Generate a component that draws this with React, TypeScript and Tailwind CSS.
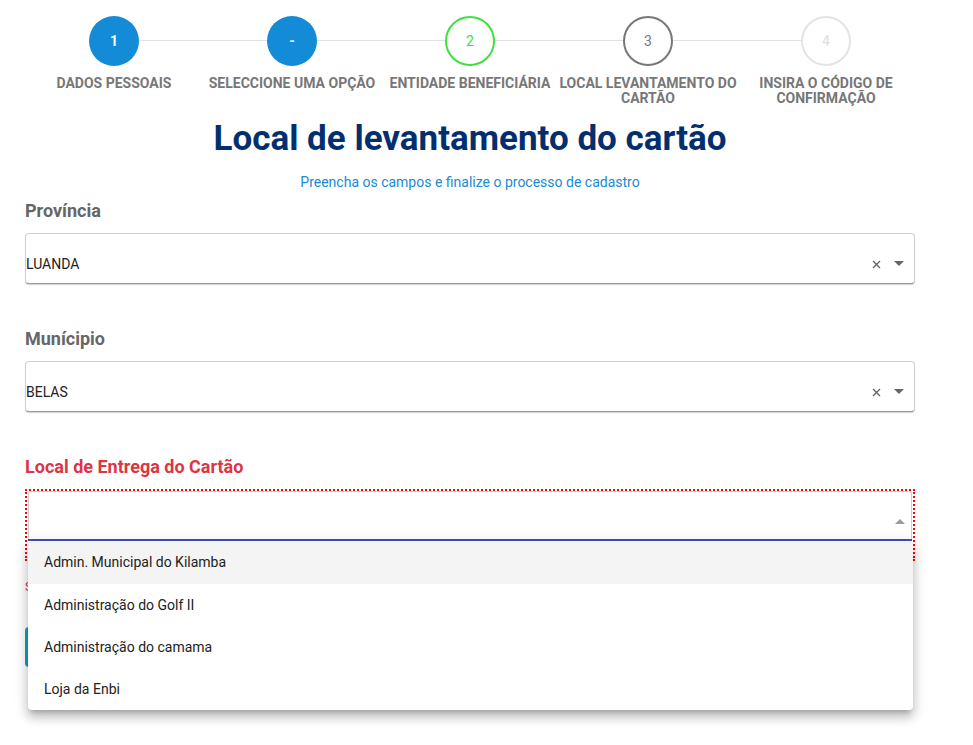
import React from "react";

const steps = [
  { n: "1", lines: ["DADOS PESSOAIS"], kind: "done" },
  { n: "-", lines: ["SELECCIONE UMA OPÇÃO"], kind: "done" },
  { n: "2", lines: ["ENTIDADE BENEFICIÁRIA"], kind: "green" },
  { n: "3", lines: ["LOCAL LEVANTAMENTO DO", "CARTÃO"], kind: "current" },
  { n: "4", lines: ["INSIRA O CÓDIGO DE", "CONFIRMAÇÃO"], kind: "todo" },
];

function Circle({ n, kind }: { n: string; kind: string }) {
  if (kind === "done")
    return (
      <div className="relative z-10 w-[50px] h-[50px] rounded-full bg-[#138bd6] text-white font-bold text-[14px] flex items-center justify-center">
        {n}
      </div>
    );
  if (kind === "green")
    return (
      <div className="relative z-10 w-[50px] h-[50px] rounded-full bg-white border-2 border-[#3ee03e] text-[#3ee03e] text-[14px] flex items-center justify-center">
        {n}
      </div>
    );
  if (kind === "current")
    return (
      <div className="relative z-10 w-[50px] h-[50px] rounded-full bg-white border-2 border-[#777777] text-[#777777] text-[14px] flex items-center justify-center">
        {n}
      </div>
    );
  return (
    <div className="relative z-10 w-[50px] h-[50px] rounded-full bg-white border-2 border-[#e4e4e4] text-[#dedede] text-[14px] flex items-center justify-center">
      {n}
    </div>
  );
}

function Caret({ up = false, color = "#666" }: { up?: boolean; color?: string }) {
  return (
    <svg width="10" height="5" viewBox="0 0 10 5">
      {up ? <path d="M0 5 L5 0 L10 5 Z" fill={color} /> : <path d="M0 0 L10 0 L5 5 Z" fill={color} />}
    </svg>
  );
}

function Cross() {
  return (
    <svg width="9" height="9" viewBox="0 0 9 9">
      <path d="M1 1 L8 8 M8 1 L1 8" stroke="#666" strokeWidth="1.4" />
    </svg>
  );
}

function FilledSelect({ value }: { value: string }) {
  return (
    <div className="h-[51px] rounded-[4px] border border-[#d0d0d0] border-b-[#9a9a9a] shadow-[0_1px_1px_rgba(0,0,0,0.18)] bg-white flex items-center pt-[11px]">
      <span className="flex-1 text-[14px] text-[#222] leading-none">{value}</span>
      <span className="mr-[13px] mt-[1px] flex items-center">
        <Cross />
      </span>
      <span className="mr-[10px] mt-[-1px] flex items-center">
        <Caret />
      </span>
    </div>
  );
}

export default function App() {
  const options = [
    "Admin. Municipal do Kilamba",
    "Administração do Golf II",
    "Administração do camama",
    "Loja da Enbi",
  ];
  return (
    <div className="min-h-[745px] bg-white font-['Roboto',_sans-serif]">
      <div className="w-[890px] ml-[25px]">
        {/* stepper */}
        <div className="flex">
          {steps.map((s, i) => (
            <div key={i} className="relative flex-1 flex flex-col items-center">
              {i < steps.length - 1 && (
                <div className="absolute top-[40px] left-[calc(50%+25px)] right-[calc(-50%+25px)] h-px bg-[#e2e2e2]" />
              )}
              <div className="mt-4">
                <Circle n={s.n} kind={s.kind} />
              </div>
              <div className="mt-[10px] text-[14px] leading-[15px] font-bold text-[#777777] text-center whitespace-nowrap">
                {s.lines.map((l, j) => (
                  <div key={j}>{l}</div>
                ))}
              </div>
            </div>
          ))}
        </div>

        <h1 className="mt-[11px] text-center text-[35px] leading-[43px] font-bold text-[#042f6f]">
          Local de levantamento do cartão
        </h1>
        <p className="mt-[12px] text-center text-[14px] leading-[20px] text-[#1a8ad4]">
          Preencha os campos e finalize o processo de cadastro
        </p>

        <div className="mt-[7px] text-[18px] leading-[24px] font-bold text-[#666]">Província</div>
        <div className="mt-[10px]">
          <FilledSelect value="LUANDA" />
        </div>

        <div className="mt-[43px] text-[18px] leading-[24px] font-bold text-[#666]">Munícipio</div>
        <div className="mt-[10px]">
          <FilledSelect value="BELAS" />
        </div>

        <div className="mt-[43px] text-[18px] leading-[24px] font-bold text-[#dc3545]">
          Local de Entrega do Cartão
        </div>
        <div className="relative mt-[10px]">
          <div className="h-[72px] border-2 border-dotted border-[#ff0000] pl-px pr-px">
            <div className="h-[48px] border border-[#cfcfcf] border-b-0 rounded-t-[3px] bg-white flex items-center justify-end pt-[12px] pr-[6px]">
              <Caret up color="#9a9a9a" />
            </div>
            <div className="h-[2px] bg-[#3f51b5]" />
          </div>

          <div className="mt-[19px] text-[12px] leading-[14px] text-[#dc3545]">
            Seleccione o local de entrega
          </div>
          <div className="mt-[33px] h-[40px] w-[120px] rounded-[4px] bg-[#17a2b8]" />

          {/* dropdown menu */}
          <div className="absolute left-[3px] top-[52px] w-[885px] bg-white rounded-b-[4px] shadow-[0px_5px_5px_-3px_rgba(0,0,0,0.2),0px_8px_10px_1px_rgba(0,0,0,0.14),0px_3px_14px_2px_rgba(0,0,0,0.12)] z-20">
            {options.map((o, i) => (
              <div
                key={o}
                className={`flex items-center pl-4 text-[14px] text-[#222] ${
                  i === 0 ? "bg-[#f4f4f4] h-[43px]" : "h-[42px]"
                }`}
              >
                {o}
              </div>
            ))}
          </div>
        </div>
      </div>
    </div>
  );
}
